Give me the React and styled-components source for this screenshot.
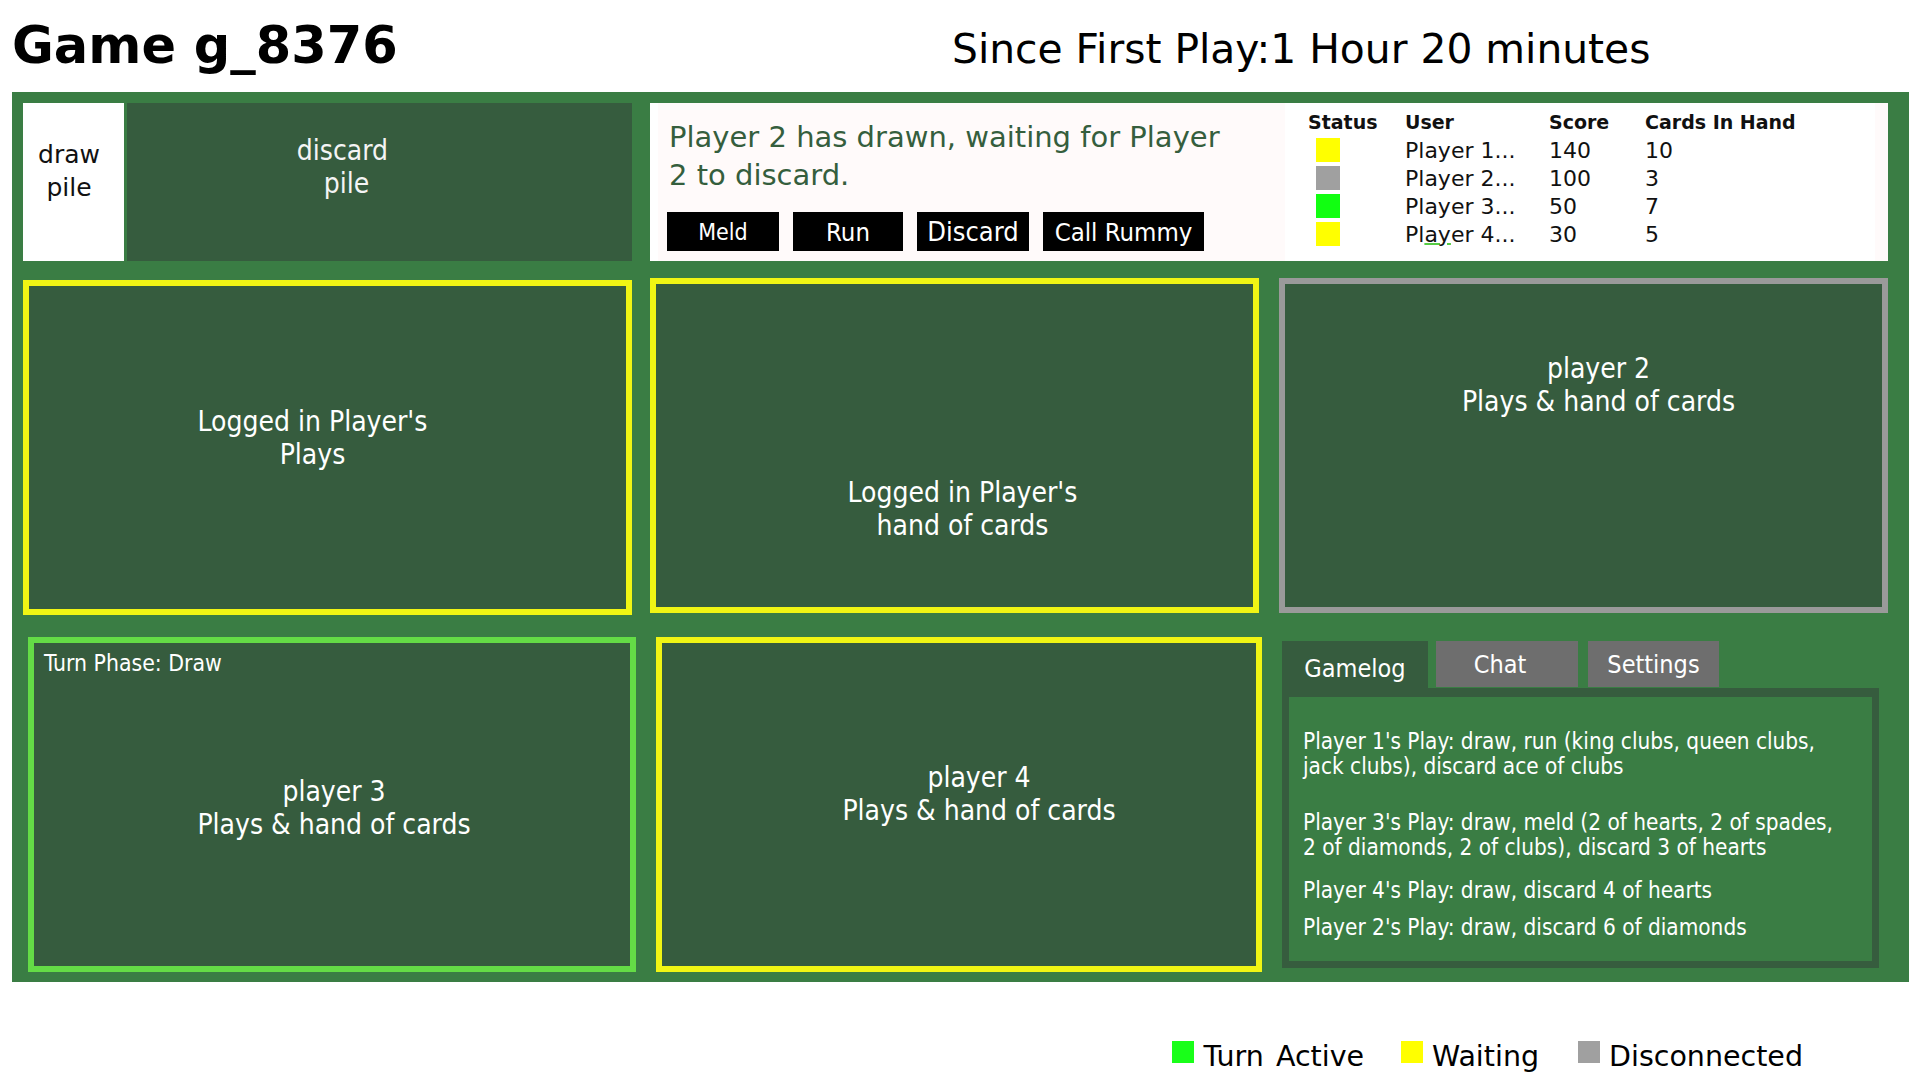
import styled, { createGlobalStyle } from "styled-components";

const WIDE = `"DejaVu Sans", Verdana, sans-serif`;
const COND = `"DejaVu Sans Condensed", "DejaVu Sans", sans-serif`;

const DARK = "#365c3e";
const FELT = "#3a7d44";

const GlobalStyle = createGlobalStyle`
  * { box-sizing: border-box; }
  html, body { margin: 0; padding: 0; background: #fff; }
  body { font-family: ${WIDE}; color: #000; }
`;

const Page = styled.div`
  width: 1920px;
  height: 1080px;
  padding: 0 11px 0 12px;
  overflow: hidden;
`;

const Header = styled.header`
  display: grid;
  grid-template-columns: 940px auto;
  align-items: baseline;
  height: 92px;
  padding-top: 16px;
`;

const Title = styled.h1`
  margin: 0;
  font: bold 51px ${WIDE};
  line-height: 59px;
`;

const Timer = styled.div`
  font: 40.8px ${WIDE};
`;

const Board = styled.main`
  height: 890px;
  background: ${FELT};
  padding: 11px 21px 10px 11px;
  display: flex;
  flex-direction: column;
`;

const TopRow = styled.div`
  display: flex;
  height: 158px;
`;

const DrawPile = styled.div`
  width: 101px;
  background: #fff;
  color: #111;
  font: 25px ${WIDE};
  line-height: 33px;
  text-align: center;
  padding: 35px 9px 0 0;
`;

const DiscardPile = styled.div`
  width: 505px;
  margin-left: 3px;
  background: ${DARK};
  color: #f4f4f4;
  font: 28px ${COND};
  text-align: center;
  padding: 31px 66px 0 0;
`;

const InfoPanel = styled.div`
  width: 1238px;
  margin-left: 18px;
  display: flex;
  background: #fffafa;
  border-left: 8px solid #fff;
`;

const MessageArea = styled.div`
  flex: 0 0 627px;
  padding: 15px 0 0 9px;
`;

const Message = styled.p`
  margin: 0;
  width: 562px;
  padding-left: 2px;
  font: 29px ${WIDE};
  line-height: 38px;
  color: #355e3d;
`;

const Actions = styled.div`
  display: flex;
  gap: 14px;
  margin-top: 18px;
`;

const ActionButton = styled.button`
  width: ${p => p.$w}px;
  height: 39px;
  margin: 0;
  padding: 0;
  border: none;
  background: #000;
  color: #fff;
  font: ${p => p.$size}px ${COND};
  display: flex;
  align-items: center;
  justify-content: center;
`;

const StatusTable = styled.div`
  flex: 0 0 590px;
  background: #fff;
  padding: 7px 0 0 23px;
  display: grid;
  grid-template-columns: 97px 144px 96px 1fr;
  grid-auto-rows: 28px;
  grid-template-rows: 27px;
  align-content: start;
`;

const HeadCell = styled.div`
  font: bold 19px ${WIDE};
  line-height: 24px;
  color: #111;
`;

const Cell = styled.div`
  font: 22px ${WIDE};
  line-height: 28px;
  color: #111;
  white-space: nowrap;
`;

const StatusDot = styled.div`
  width: 24px;
  height: 24px;
  margin: 1px 0 0 8px;
  background: ${p => p.$color};
`;

const Squiggle = styled.span`
  text-decoration: underline 2px #55cc44;
  text-underline-offset: 1px;
`;

const MidRow = styled.div`
  display: flex;
  align-items: flex-start;
  height: 337px;
  margin-top: 17px;
`;

const BottomRow = styled.div`
  display: flex;
  align-items: flex-start;
  height: 335px;
  margin-top: 22px;
  padding-left: 5px;
`;

const Zone = styled.section`
  width: ${p => p.$w}px;
  height: 335px;
  margin-left: ${p => p.$ml || 0}px;
  margin-top: ${p => p.$mt || 0}px;
  border: 6px solid ${p => p.$border};
  background: ${DARK};
  color: #fff;
  font: 28px ${COND};
  text-align: center;
  padding-top: ${p => p.$top}px;
`;

const ZoneText = styled.div`
  margin-top: ${p => p.$mt || 0}px;
  transform: translateX(${p => p.$shift || 0}px);
`;

const PhaseLabel = styled.div`
  text-align: left;
  padding-left: 10px;
  font: 22.8px ${COND};
`;

const LogPanel = styled.section`
  width: 597px;
  height: 327px;
  margin: 4px 0 0 20px;
  display: flex;
  flex-direction: column;
`;

const Tabs = styled.div`
  display: flex;
  align-items: flex-start;
  height: 47px;
`;

const Tab = styled.div`
  width: ${p => p.$w}px;
  height: ${p => (p.$active ? 47 : 46)}px;
  margin-left: ${p => p.$ml || 0}px;
  padding-top: ${p => (p.$active ? 7 : 0)}px;
  padding-right: ${p => p.$pr || 0}px;
  background: ${p => (p.$active ? DARK : "#6e6e6e")};
  color: #fff;
  font: 25px ${COND};
  display: flex;
  align-items: center;
  justify-content: center;
`;

const LogBody = styled.div`
  flex: 1;
  background: ${FELT};
  border: 7px solid ${DARK};
  border-top-width: 9px;
  padding: 32px 0 0 14px;
`;

const LogEntry = styled.p`
  margin: ${p => p.$mt || 0}px 0 0;
  max-width: 538px;
  font: 22.4px ${COND};
  line-height: 25px;
  color: #fff;
`;

const Legend = styled.footer`
  display: flex;
  justify-content: flex-end;
  padding: 58px 106px 0 0;
`;

const LegendItem = styled.div`
  display: flex;
  align-items: flex-start;
  gap: 9px;
  margin-left: ${p => p.$ml || 0}px;
  font: 28.5px ${WIDE};
  word-spacing: ${p => p.$ws || 0}px;
`;

const Swatch = styled.span`
  width: 22px;
  height: 22px;
  margin-top: 1px;
  background: ${p => p.$color};
`;

const YELLOW = "#f0f514";
const players = [
  { name: "Player 1...", score: 140, cards: 10, color: "#ffff00" },
  { name: "Player 2...", score: 100, cards: 3, color: "#a0a0a0" },
  { name: "Player 3...", score: 50, cards: 7, color: "#11ff11" },
  { name: "Player 4...", score: 30, cards: 5, color: "#ffff00" },
];

const log = [
  { mt: 0, text: "Player 1's Play: draw, run (king clubs, queen clubs, jack clubs), discard ace of clubs" },
  { mt: 31, text: "Player 3's Play: draw, meld (2 of hearts, 2 of spades, 2 of diamonds, 2 of clubs), discard 3 of hearts" },
  { mt: 18, text: "Player 4's Play: draw, discard 4 of hearts" },
  { mt: 12, text: "Player 2's Play: draw, discard 6 of diamonds" },
];

export default function App() {
  return (
    <Page>
      <GlobalStyle />
      <Header>
        <Title>Game g_8376</Title>
        <Timer>Since First Play:1 Hour 20 minutes</Timer>
      </Header>

      <Board>
        <TopRow>
          <DrawPile>draw<br />pile</DrawPile>
          <DiscardPile>discard&nbsp;<br />pile</DiscardPile>
          <InfoPanel>
            <MessageArea>
              <Message>Player 2 has drawn, waiting for Player 2 to discard.</Message>
              <Actions>
                <ActionButton $w={112} $size={23}>Meld</ActionButton>
                <ActionButton $w={110} $size={25.5}>Run</ActionButton>
                <ActionButton $w={112} $size={27}>Discard</ActionButton>
                <ActionButton $w={161} $size={25.5}>Call Rummy</ActionButton>
              </Actions>
            </MessageArea>
            <StatusTable>
              <HeadCell>Status</HeadCell>
              <HeadCell>User</HeadCell>
              <HeadCell>Score</HeadCell>
              <HeadCell>Cards In Hand</HeadCell>
              {players.map((p, i) => [
                <Cell key={`s${i}`}><StatusDot $color={p.color} /></Cell>,
                <Cell key={`n${i}`}>
                  {i === 3 ? <>Pl<Squiggle>ay</Squiggle>er 4...</> : p.name}
                </Cell>,
                <Cell key={`p${i}`}>{p.score}</Cell>,
                <Cell key={`c${i}`}>{p.cards}</Cell>,
              ])}
            </StatusTable>
          </InfoPanel>
        </TopRow>

        <MidRow>
          <Zone $w={609} $mt={2} $border={YELLOW} $top={119}>
            <ZoneText $shift={-15}>Logged in Player's<br />Plays</ZoneText>
          </Zone>
          <Zone $w={609} $ml={18} $border={YELLOW} $top={192}>
            <ZoneText $shift={8}>Logged in Player's<br />hand of cards</ZoneText>
          </Zone>
          <Zone $w={609} $ml={20} $border="#9a9a9a" $top={68}>
            <ZoneText $shift={15}>player 2<br />Plays &amp; hand of cards</ZoneText>
          </Zone>
        </MidRow>

        <BottomRow>
          <Zone $w={608} $border="#64dc46" $top={7}>
            <PhaseLabel>Turn Phase: Draw</PhaseLabel>
            <ZoneText $mt={99} $shift={2}>player 3<br />Plays &amp; hand of cards</ZoneText>
          </Zone>
          <Zone $w={606} $ml={20} $border={YELLOW} $top={118}>
            <ZoneText $shift={20}>player 4<br />Plays &amp; hand of cards</ZoneText>
          </Zone>
          <LogPanel>
            <Tabs>
              <Tab $w={146} $active>Gamelog</Tab>
              <Tab $w={142} $ml={8} $pr={14}>Chat</Tab>
              <Tab $w={131} $ml={10}>Settings</Tab>
            </Tabs>
            <LogBody>
              {log.map((e, i) => (
                <LogEntry key={i} $mt={e.mt}>{e.text}</LogEntry>
              ))}
            </LogBody>
          </LogPanel>
        </BottomRow>
      </Board>

      <Legend>
        <LegendItem $ws={3}><Swatch $color="#19ff19" />Turn Active</LegendItem>
        <LegendItem $ml={37}><Swatch $color="#ffff00" />Waiting</LegendItem>
        <LegendItem $ml={39}><Swatch $color="#a0a0a0" />Disconnected</LegendItem>
      </Legend>
    </Page>
  );
}
